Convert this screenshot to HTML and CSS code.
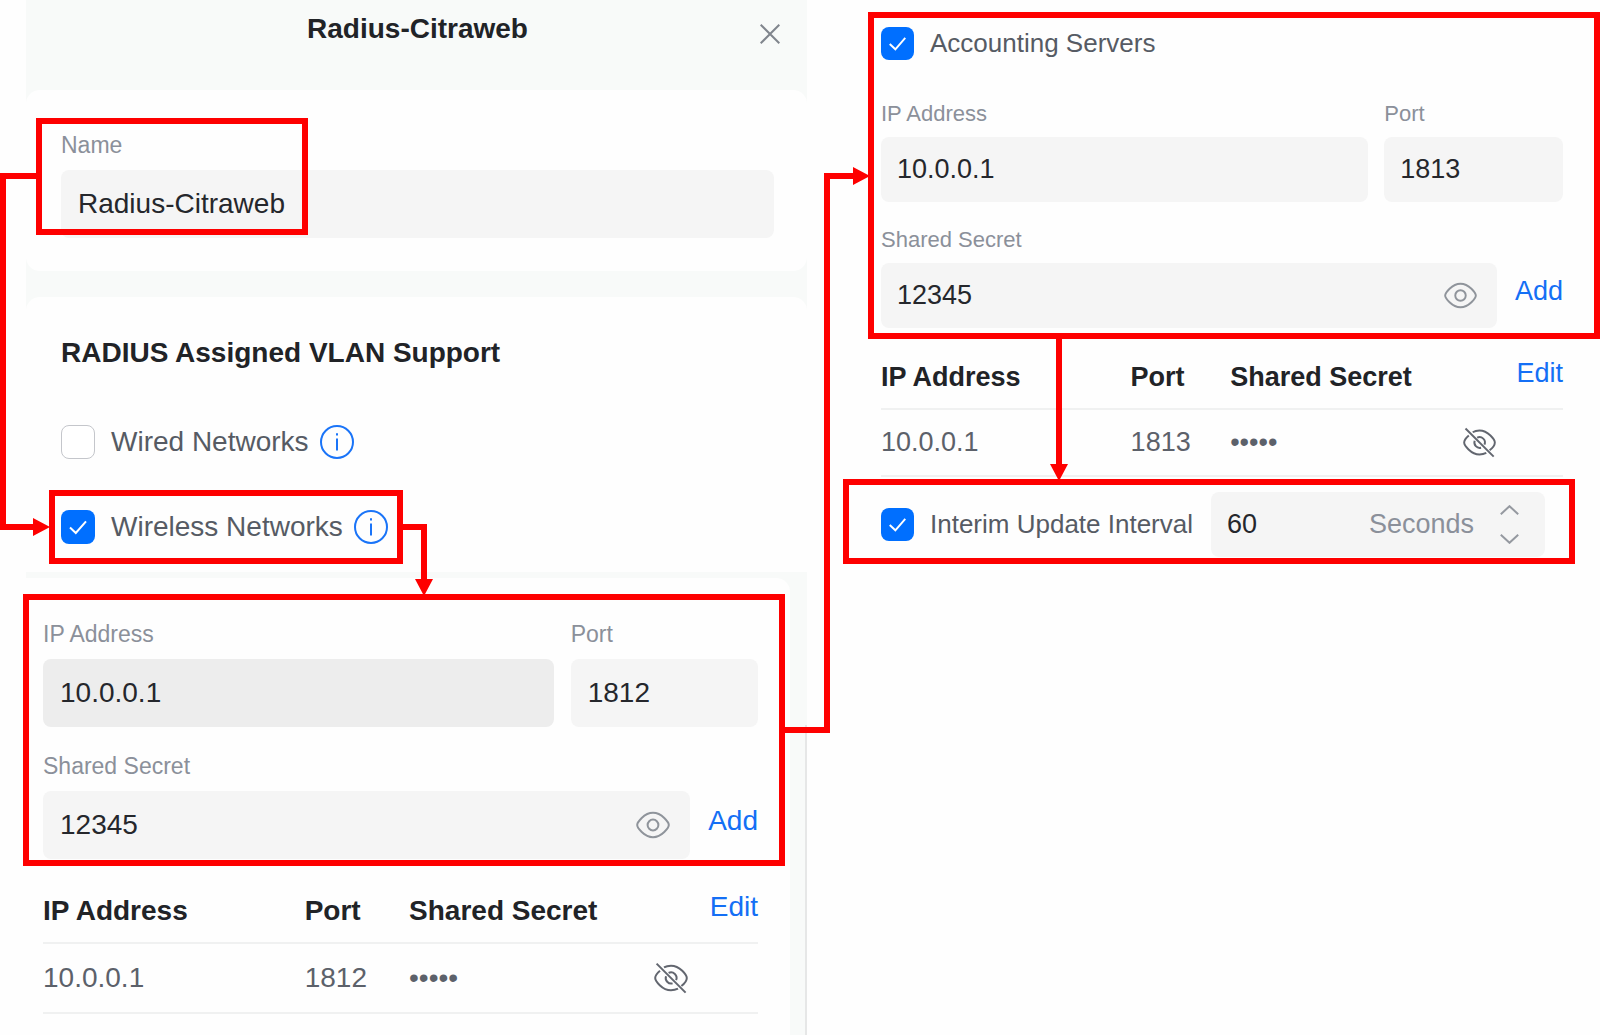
FILE: index.html
```html
<!DOCTYPE html>
<html lang="en">
<head>
    <meta charset="UTF-8">
    <meta name="viewport" content="width=device-width, initial-scale=1.0">
    <title>Radius-Citraweb</title>
    <link rel="stylesheet" href="styles.css">
</head>
<body>
    <svg class="sprite" aria-hidden="true">
        <symbol id="eye" viewBox="0 0 34 34">
            <path d="M1.2 17C1.2 14.6 8 4.8 17 4.8S32.8 14.6 32.8 17 26 29.2 17 29.2 1.2 19.4 1.2 17Z"/>
            <circle cx="17" cy="17" r="5.4"/>
        </symbol>
        <symbol id="eye-off" viewBox="0 0 34 34">
            <path d="M10 6.4C12 5.2 14.4 4.7 17 4.7c9 0 15.8 9.6 15.8 12.3 0 1.8-2 5.4-5.4 8"/>
            <path d="M6 9.8C3 12.4 1.2 15.5 1.2 17c0 2.7 6.8 12.3 15.8 12.3 2.6 0 5-.6 7-1.6"/>
            <path d="M14.6 11.9a5.6 5.6 0 0 1 7.5 7.3M12 15.2a5.6 5.6 0 0 0 6.6 7.2"/>
            <path d="M2.6 2.6 31.6 31.6"/>
        </symbol>
        <symbol id="info" viewBox="0 0 34 34">
            <circle cx="17" cy="17" r="16"/>
            <path d="M17 8.2v2.4M17 13.4v12"/>
        </symbol>
    </svg>

    <main class="page">
        <section class="panel">
            <header class="panel-header">
                <h1>Radius-Citraweb</h1>
                <button class="close" type="button" aria-label="Close">
                    <svg viewBox="0 0 20 20"><path d="M.7.7l18.6 18.6M19.3.7.7 19.3"/></svg>
                </button>
            </header>

            <div class="card card-name">
                <div class="field">
                    <label for="name">Name</label>
                    <div class="box"><input id="name" type="text" value="Radius-Citraweb"></div>
                </div>
            </div>

            <div class="card card-vlan">
                <h2>RADIUS Assigned VLAN Support</h2>
                <div class="check">
                    <input id="wired" type="checkbox">
                    <label for="wired">Wired Networks</label>
                    <svg class="icon info"><use href="#info"/></svg>
                </div>
                <div class="check">
                    <input id="wireless" type="checkbox" checked>
                    <label for="wireless">Wireless Networks</label>
                    <svg class="icon info"><use href="#info"/></svg>
                </div>
            </div>

            <div class="card card-auth">
                <div class="server">
                    <div class="field">
                        <label for="auth-ip">IP Address</label>
                        <div class="box active"><input id="auth-ip" type="text" value="10.0.0.1"></div>
                    </div>
                    <div class="field">
                        <label for="auth-port">Port</label>
                        <div class="box"><input id="auth-port" type="text" value="1812"></div>
                    </div>
                    <div class="field wide">
                        <label for="auth-secret">Shared Secret</label>
                        <div class="secret">
                            <div class="box">
                                <input id="auth-secret" type="text" value="12345">
                                <button type="button" aria-label="Hide secret"><svg class="icon"><use href="#eye"/></svg></button>
                            </div>
                            <button class="link" type="button">Add</button>
                        </div>
                    </div>
                </div>
                <table>
                    <thead>
                        <tr>
                            <th class="col-ip">IP Address</th>
                            <th class="col-port">Port</th>
                            <th>Shared Secret</th>
                            <th class="col-action"><button class="link" type="button">Edit</button></th>
                        </tr>
                    </thead>
                    <tbody>
                        <tr>
                            <td>10.0.0.1</td>
                            <td>1812</td>
                            <td>•••••</td>
                            <td><button type="button" aria-label="Show secret"><svg class="icon"><use href="#eye-off"/></svg></button></td>
                        </tr>
                    </tbody>
                </table>
            </div>
        </section>

        <section class="accounting">
            <div class="check">
                <input id="acct" type="checkbox" checked>
                <label for="acct">Accounting Servers</label>
            </div>
            <div class="server">
                <div class="field">
                    <label for="acct-ip">IP Address</label>
                    <div class="box"><input id="acct-ip" type="text" value="10.0.0.1"></div>
                </div>
                <div class="field">
                    <label for="acct-port">Port</label>
                    <div class="box"><input id="acct-port" type="text" value="1813"></div>
                </div>
                <div class="field wide">
                    <label for="acct-secret">Shared Secret</label>
                    <div class="secret">
                        <div class="box">
                            <input id="acct-secret" type="text" value="12345">
                            <button type="button" aria-label="Hide secret"><svg class="icon"><use href="#eye"/></svg></button>
                        </div>
                        <button class="link" type="button">Add</button>
                    </div>
                </div>
            </div>
            <table>
                <thead>
                    <tr>
                        <th class="col-ip">IP Address</th>
                        <th class="col-port">Port</th>
                        <th>Shared Secret</th>
                        <th class="col-action"><button class="link" type="button">Edit</button></th>
                    </tr>
                </thead>
                <tbody>
                    <tr>
                        <td>10.0.0.1</td>
                        <td>1813</td>
                        <td>•••••</td>
                        <td><button type="button" aria-label="Show secret"><svg class="icon"><use href="#eye-off"/></svg></button></td>
                    </tr>
                </tbody>
            </table>
            <div class="interval">
                <div class="check">
                    <input id="interim" type="checkbox" checked>
                    <label for="interim">Interim Update Interval</label>
                </div>
                <div class="box">
                    <input type="number" value="60" aria-label="Interval in seconds">
                    <span class="unit">Seconds</span>
                    <div class="stepper">
                        <button type="button" aria-label="Increase"><svg viewBox="0 0 19 10"><path d="M.8 9.2l8.7-8 8.7 8"/></svg></button>
                        <button type="button" aria-label="Decrease"><svg viewBox="0 0 19 10"><path d="M.8.8l8.7 8 8.7-8"/></svg></button>
                    </div>
                </div>
            </div>
        </section>

        <!-- step markers drawn over the form -->
        <svg class="steps" viewBox="0 0 1600 1035" aria-hidden="true">
            <g class="lines">
                <rect x="39" y="121" width="266" height="111"/>
                <rect x="52" y="493" width="348" height="68"/>
                <rect x="26" y="597" width="756" height="266"/>
                <rect x="871" y="15" width="726" height="321"/>
                <rect x="846" y="482" width="726" height="79"/>
                <path d="M36 176H3v351h31"/>
                <path d="M403 527h21v53"/>
                <path d="M785 730h42V176h27"/>
                <path d="M1059 339v126"/>
            </g>
            <path d="M33 518l17 9-17 9zM415 579h18l-9 17zM853 167l17 9-17 9zM1050 464h18l-9 17z"/>
        </svg>
    </main>
</body>
</html>
```

FILE: styles.css
```css
* {
    box-sizing: border-box;
}
body {
    margin: 0;
    background: #fefefe;
    color: #212327;
    font-family: "Liberation Sans", Arial, sans-serif;
}
h1, h2 {
    margin: 0;
    font-size: 28px;
    line-height: 34px;
}
button {
    display: block;
    padding: 0;
    border: none;
    background: none;
    font: inherit;
    cursor: pointer;
}
svg {
    display: block;
    fill: none;
}
.sprite {
    position: absolute;
    width: 0;
    height: 0;
}
.page {
    position: relative;
    display: grid;
    grid-template-columns: 781fr 682fr;
    gap: 74px;
    min-height: 100vh;
    padding: 0 37px 0 26px;
}

/* left panel */
.panel {
    --text: 28px;
    --check-text: 28px;
    --label: 23px;
    --label-line: 28px;
    --label-gap: 11px;
    --field: 68px;
    --pad: 17px;
    --icon: 34px;
    --gap: 25px;
    --head: 65px;
    --row: 70px;
    --table-top: 20px;
    position: relative;
    display: flex;
    flex-direction: column;
    background: #f8faf9;
}
/* scrollbar thumb */
.panel::after {
    content: "";
    position: absolute;
    top: 70%;
    right: 0;
    bottom: 0;
    width: 2px;
    background: #e6e7e7;
}
.panel-header {
    display: flex;
    align-items: flex-start;
    height: 90px;
    padding: 0 27px;
}
.panel-header h1 {
    flex: 1;
    padding: 12px 0 0 22px;
    text-align: center;
}
.close {
    padding-top: 24px;
}
.close svg {
    width: 20px;
    height: 20px;
    stroke: #80858d;
    stroke-width: 2;
}
.card {
    background: #fefefe;
    border-radius: 14px;
}
.card-name {
    margin-bottom: 26px;
    padding: 41px 33px 33px 35px;
}
.card-vlan {
    margin-bottom: 6px;
    padding: 39px 35px 28px;
    border-radius: 14px 14px 0 0;
}
.card-vlan h2 {
    margin-bottom: 55px;
}
.card-vlan .check + .check {
    margin-top: 51px;
}
.card-auth {
    flex: 1;
    margin-right: 17px;
    padding: 42px 32px 20px 17px;
    border-radius: 0 14px 0 0;
}

/* right column */
.accounting {
    --text: 27px;
    --check-text: 26px;
    --label: 22px;
    --label-line: 27px;
    --label-gap: 10px;
    --field: 65px;
    --pad: 16px;
    --icon: 33px;
    --gap: 24px;
    --head: 64px;
    --row: 67px;
    --table-top: 18px;
    padding-top: 27px;
}
.accounting > .check {
    margin-bottom: 40px;
}

/* form parts */
.server {
    display: grid;
    grid-template-columns: 30fr 11fr;
    gap: var(--gap) var(--pad);
}
.wide {
    grid-column: 1 / -1;
}
.field label {
    display: block;
    margin-bottom: var(--label-gap);
    color: #8b909a;
    font-size: var(--label);
    line-height: var(--label-line);
}
.box {
    display: flex;
    flex: 1;
    align-items: center;
    min-width: 0;
    height: var(--field);
    padding: 0 20px 0 var(--pad);
    border-radius: 8px;
    background: #f5f5f5;
}
.box.active {
    background: #ededed;
}
.box input {
    flex: 1;
    width: 0;
    min-width: 0;
    padding: 0;
    border: none;
    outline: none;
    background: none;
    color: #25272c;
    font-family: inherit;
    font-size: var(--text);
}
.box input[type="number"] {
    appearance: textfield;
}
.secret {
    display: flex;
    gap: 18px;
}
.link {
    padding-bottom: 8px;
    color: #146ff5;
    font-size: var(--text);
}
.icon {
    width: var(--icon);
    height: var(--icon);
    stroke: #8f949b;
    stroke-width: 2;
}
td .icon {
    stroke: #62666f;
}
.icon.info {
    stroke: #1a74f8;
}
.check {
    display: flex;
    align-items: center;
    gap: 11px;
    color: #565b64;
    font-size: var(--check-text);
    line-height: var(--icon);
}
.check input {
    appearance: none;
    width: var(--icon);
    height: var(--icon);
    margin: 0 5px 0 0;
    border: 1px solid #c4c6cb;
    border-radius: 8px;
    background: #fff;
}
.check input:checked {
    border: none;
    background: #006fff url("data:image/svg+xml,%3Csvg xmlns='http://www.w3.org/2000/svg' viewBox='0 0 34 34'%3E%3Cpath d='M9 17.5l5.8 5.5L25 11.3' fill='none' stroke='white' stroke-width='2'/%3E%3C/svg%3E") center / contain no-repeat;
}
table {
    width: 100%;
    margin-top: var(--table-top);
    border-collapse: separate;
    border-spacing: 0;
    table-layout: fixed;
    font-size: var(--text);
}
th, td {
    padding: 0;
    border-bottom: 2px solid #f0f1f1;
    text-align: left;
}
th {
    height: var(--head);
}
td {
    height: var(--row);
    color: #5c616a;
}
th .link {
    margin-left: auto;
    font-weight: normal;
}
.col-ip {
    width: 36.6%;
}
.col-port {
    width: 14.6%;
}
.col-action {
    width: 14.6%;
}
.interval {
    display: flex;
    align-items: center;
    gap: 18px;
    margin: 15px 18px 0 0;
}
.interval .box {
    gap: 26px;
    padding-right: 26px;
}
.unit {
    color: #8b909a;
    font-size: var(--text);
}
.stepper {
    display: grid;
    gap: 19px;
}
.stepper svg {
    width: 19px;
    height: 10px;
    stroke: #9599a0;
    stroke-width: 2;
}

/* step markers */
.steps {
    position: absolute;
    top: 0;
    left: 0;
    width: 100%;
    fill: #fe0000;
    pointer-events: none;
}
.lines {
    fill: none;
    stroke: #fe0000;
    stroke-width: 6;
}
```
